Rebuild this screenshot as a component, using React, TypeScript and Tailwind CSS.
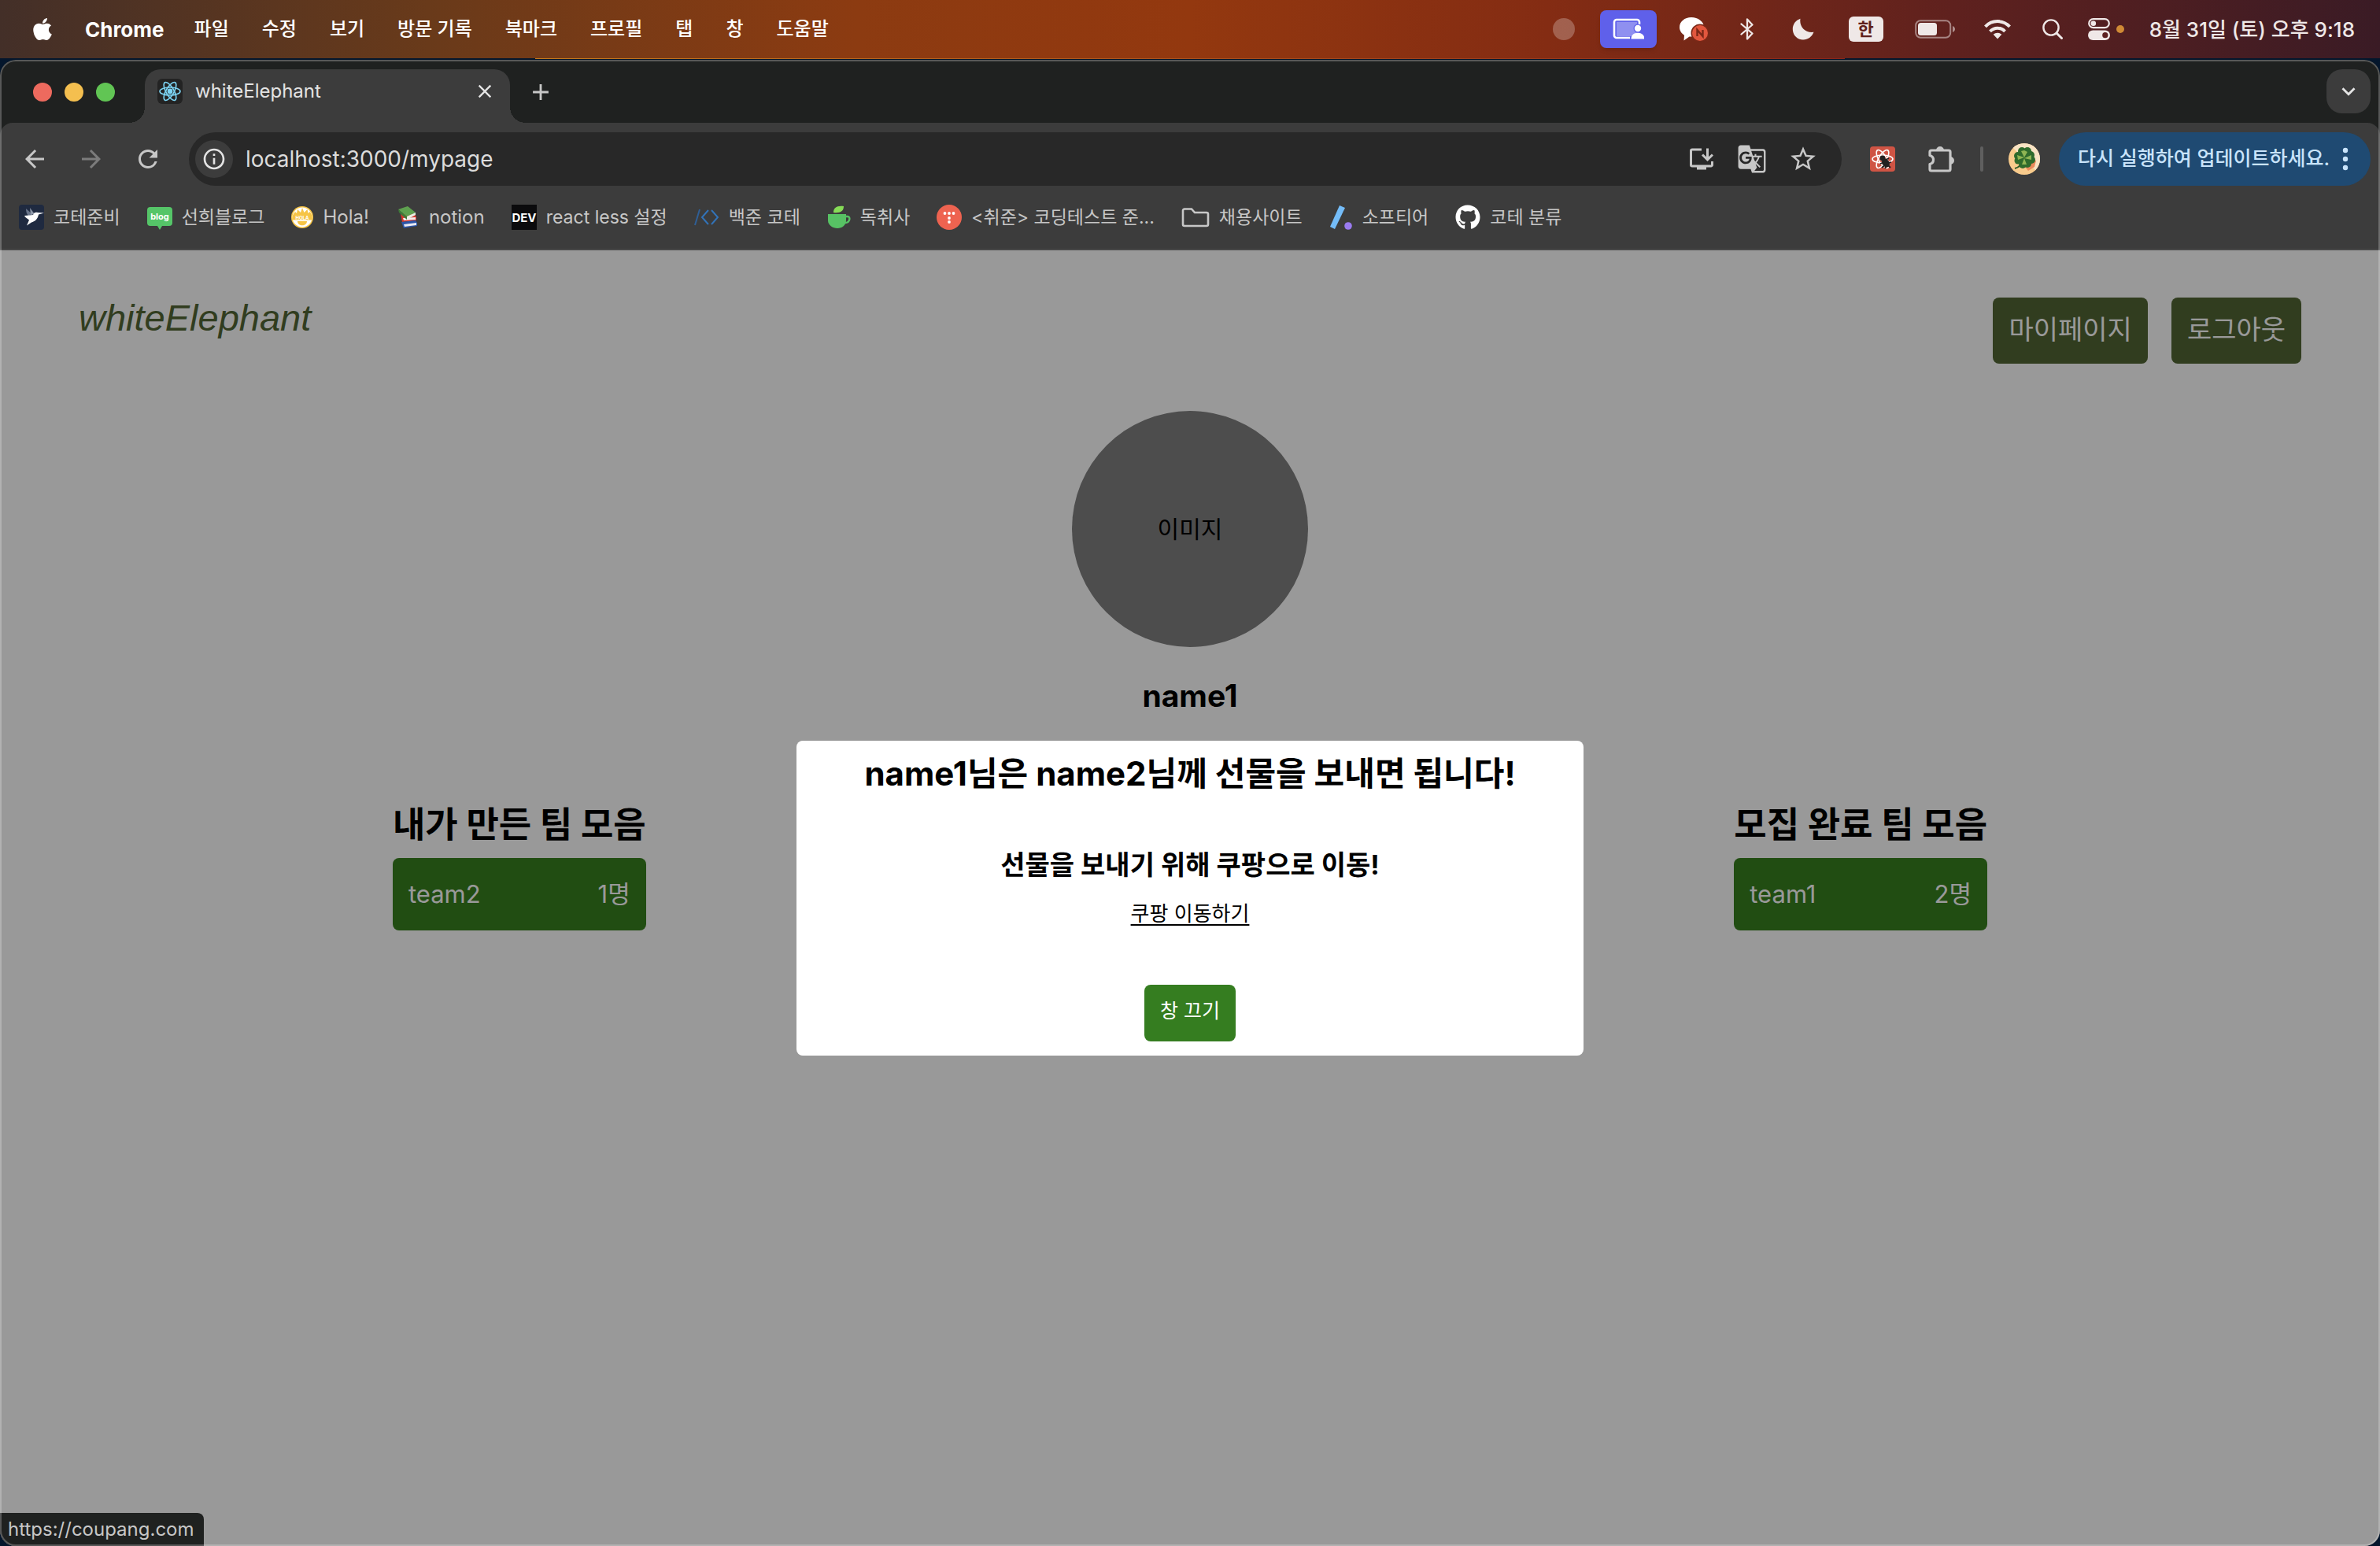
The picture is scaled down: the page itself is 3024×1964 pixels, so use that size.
import React from "react";
import {
  MdAdd,
  MdArrowBack,
  MdArrowForward,
  MdClose,
  MdGTranslate,
  MdInfoOutline,
  MdInstallDesktop,
  MdKeyboardArrowDown,
  MdRefresh,
  MdStarBorder,
} from "react-icons/md";
import { FaApple, FaGithub } from "react-icons/fa";

const menus = ["파일", "수정", "보기", "방문 기록", "북마크", "프로필", "탭", "창", "도움말"];

function ReactAtom({ color, core = 2 }: { color: string; core?: number }) {
  return (
    <g fill="none" stroke={color} strokeWidth="1.6">
      <ellipse cx="16" cy="16" rx="13" ry="5" />
      <ellipse cx="16" cy="16" rx="13" ry="5" transform="rotate(60 16 16)" />
      <ellipse cx="16" cy="16" rx="13" ry="5" transform="rotate(120 16 16)" />
      <circle cx="16" cy="16" r={core} fill={color} />
    </g>
  );
}

function ScreenShareIcon() {
  return (
    <svg viewBox="0 0 40 28" className="w-10 h-7" aria-hidden="true">
      <rect x="5" y="5" width="26" height="18" fill="#fff" opacity="0.3" />
      <path d="M22 25H5a3 3 0 0 1-3-3V5a3 3 0 0 1 3-3h26a3 3 0 0 1 3 3v3" fill="none" stroke="#fff" strokeWidth="2.6" />
      <circle cx="32" cy="13" r="5.5" fill="#5f60ea" />
      <circle cx="32" cy="13" r="4.2" fill="#fff" />
      <path d="M23.500 26.500c0-5 3.500-7.700 8.500-7.700s8.500 2.700 8.500 7.700z" fill="#fff" />
    </svg>
  );
}

function ChatIcon() {
  return (
    <svg viewBox="0 0 38 32" className="w-[38px] h-8" aria-hidden="true">
      <path d="M16 1C7.500 1 1 6.500 1 13.500c0 4.500 2.500 8 6 10.200L6.500 30.500l7-5H16c9 0 16-5 16-12S24.500 1 16 1z" fill="#fff" />
      <circle cx="27" cy="21" r="11.500" fill="#7b2817" />
      <circle cx="27" cy="21" r="10" fill="#e2573e" />
      <path d="M23.500 25v-8l7 8v-8" fill="none" stroke="#7b2817" strokeWidth="2.400" />
    </svg>
  );
}

function BluetoothIcon() {
  return (
    <svg viewBox="0 0 18 30" className="w-[18px] h-[30px]" aria-hidden="true">
      <path d="M1.500 8.500l14 12L9 27.500V2.500l6.500 7-14 12" fill="none" stroke="#efe8e7" strokeWidth="2.300" strokeLinejoin="round" strokeLinecap="round" />
    </svg>
  );
}

function MoonIcon() {
  return (
    <svg viewBox="0 0 28 28" className="w-7 h-7" aria-hidden="true">
      <path d="M10.500 0.800C9 9.500 15 19 27.500 17.800 25 24 20 27.500 14 27.500 6.500 27.500 0.800 21.500 0.800 14 0.800 8 4.500 2.800 10.500 0.800z" fill="#efe8e7" />
    </svg>
  );
}

function BatteryIcon() {
  return (
    <svg viewBox="0 0 52 24" className="w-[52px] h-6" aria-hidden="true">
      <rect x="1.200" y="1.200" width="44" height="21.600" rx="6" fill="none" stroke="#fff" strokeOpacity="0.45" strokeWidth="2" />
      <rect x="4" y="4" width="24" height="16" rx="3.500" fill="#efe8e7" />
      <path d="M48 8c4 1.500 4 6.500 0 8z" fill="#fff" opacity="0.5" />
    </svg>
  );
}

function WifiIcon() {
  return (
    <svg viewBox="0 0 34 26" className="w-[34px] h-[26px]" aria-hidden="true">
      <g fill="none" stroke="#efe8e7" strokeWidth="4">
        <path d="M1.500 9.800C10 0.800 24 0.800 32.500 9.800" />
        <path d="M7.500 15.800c5.500-5.500 13.500-5.500 19 0" />
      </g>
      <path d="M17 25.500l-5.300-5.700c3-2.800 7.600-2.800 10.600 0z" fill="#efe8e7" />
    </svg>
  );
}

function SearchIcon() {
  return (
    <svg viewBox="0 0 26 26" className="w-[26px] h-[26px]" aria-hidden="true">
      <circle cx="11" cy="11" r="9.600" fill="none" stroke="#efe8e7" strokeWidth="2.400" />
      <path d="M18 18l6.500 6.500" stroke="#efe8e7" strokeWidth="3" strokeLinecap="round" />
    </svg>
  );
}

function ControlCenterIcon() {
  return (
    <svg viewBox="0 0 28 28" className="w-7 h-7" aria-hidden="true">
      <rect x="1.200" y="1.200" width="25.600" height="11" rx="5.500" fill="none" stroke="#efe8e7" strokeWidth="2.200" />
      <circle cx="6.800" cy="6.700" r="3.300" fill="#efe8e7" />
      <rect x="0" y="15.500" width="28" height="12.500" rx="6.200" fill="#efe8e7" />
      <circle cx="21.800" cy="21.700" r="3.600" fill="#5b2020" />
    </svg>
  );
}

function MenuBar() {
  return (
    <header className="flex h-[74px] items-center bg-[linear-gradient(90deg,#432f28,#693a1a_18%,#8c3b11_36%,#93380f_50%,#842c13_65%,#5f211e_82%,#3a1b25)] pl-[38px] pr-8 text-[24px] text-white">
      <nav aria-label="메뉴 막대" className="flex items-center gap-[42px] font-medium [text-shadow:0_2px_4px_rgba(0,0,0,0.3)]">
        <button aria-label="Apple" className="-mr-1">
          <FaApple size={32} />
        </button>
        <button className="-mr-1 text-[26px] font-bold">Chrome</button>
        {menus.map((m) => (
          <button key={m}>{m}</button>
        ))}
      </nav>
      <div className="ml-auto flex items-center text-[#efe8e7]">
        <span className="h-7 w-7 rounded-full bg-white/25" />
        <span className="ml-8 flex h-12 w-[72px] items-center justify-center rounded-lg bg-[#5f60ea] shadow-md">
          <ScreenShareIcon />
        </span>
        <span className="ml-7"><ChatIcon /></span>
        <span className="ml-10"><BluetoothIcon /></span>
        <span className="ml-12"><MoonIcon /></span>
        <span className="ml-11 flex h-8 w-11 items-center justify-center rounded-md bg-[#efe8e7] text-[22px] font-bold leading-8 text-[#5f1f1c]">한</span>
        <span className="ml-10"><BatteryIcon /></span>
        <span className="ml-9"><WifiIcon /></span>
        <span className="ml-10"><SearchIcon /></span>
        <span className="ml-8"><ControlCenterIcon /></span>
        <span className="ml-2 h-[10px] w-[10px] rounded-full bg-[#d08a35]" />
        <time className="ml-8 text-[26px] font-medium">8월 31일 (토) 오후 9:18</time>
      </div>
    </header>
  );
}

function TabStrip() {
  return (
    <div className="flex h-20 items-end pl-[42px] pr-3 pt-3">
      <div className="flex h-full items-center gap-4 pb-[10px]">
        <button aria-label="닫기" className="h-6 w-6 rounded-full bg-[#ed6a5e]" />
        <button aria-label="최소화" className="h-6 w-6 rounded-full bg-[#f4bf4f]" />
        <button aria-label="최대화" className="h-6 w-6 rounded-full bg-[#61c554]" />
      </div>
      <div className="relative ml-[38px] flex h-full w-[464px] items-center rounded-t-[20px] bg-[#3c3c3c] px-4 pb-3 before:absolute before:-left-5 before:bottom-0 before:h-5 before:w-5 before:bg-[radial-gradient(circle_at_0_0,transparent_20px,#3c3c3c_20px)] after:absolute after:-right-5 after:bottom-0 after:h-5 after:w-5 after:bg-[radial-gradient(circle_at_100%_0,transparent_20px,#3c3c3c_20px)]">
        <svg viewBox="0 0 32 32" className="h-8 w-8 rounded-md bg-[#232323]" aria-hidden="true">
          <ReactAtom color="#7bd3f2" core={2.6} />
        </svg>
        <span className="ml-4 text-[24px] text-[#e3e3e3]">whiteElephant</span>
        <button aria-label="탭 닫기" className="ml-auto mr-0.5 text-[#e3e3e3]">
          <MdClose size={28} />
        </button>
      </div>
      <button aria-label="새 탭" className="mb-[22px] ml-[22px] text-[#c7c7c7]">
        <MdAdd size={34} />
      </button>
      <button aria-label="탭 검색" className="mb-3 ml-auto flex h-14 w-14 items-center justify-center rounded-[20px] bg-[#3c3c3c] text-[#e3e3e3]">
        <MdKeyboardArrowDown size={34} />
      </button>
    </div>
  );
}

function PuzzleIcon() {
  return (
    <svg viewBox="0 0 34 34" className="h-[34px] w-[34px]" aria-hidden="true">
      <path
        d="M4 6h22a2 2 0 0 1 2 2v22a2 2 0 0 1-2 2H4a2 2 0 0 1-2-2v-6.500c6-1.500 6-9.500 0-11V8a2 2 0 0 1 2-2z"
        fill="none"
        stroke="#c7c7c7"
        strokeWidth="3.200"
        strokeLinejoin="round"
      />
      <path d="M10 6a5 5 0 0 1 10 0zM28 14a5 5 0 0 1 0 10z" fill="#c7c7c7" />
    </svg>
  );
}

function CloverAvatar() {
  return (
    <svg viewBox="0 0 40 40" className="h-10 w-10 rounded-full" aria-hidden="true">
      <rect width="40" height="40" fill="#f8cb8c" />
      <path d="M0 0l40 40V0z" fill="#f8e3c4" />
      <path d="M16 24l9 11 8-5 2-8-8-2z" fill="#e98a5c" />
      <path d="M20 19C17 27 13 31 8 32" fill="none" stroke="#2d5a27" strokeWidth="2" />
      <g fill="#2f6b2c">
        <circle cx="20" cy="18" r="8" />
        <circle cx="17" cy="10" r="5" />
        <circle cx="24" cy="10" r="5" />
        <circle cx="12" cy="16" r="5" />
        <circle cx="12" cy="22" r="4.500" />
        <circle cx="28" cy="15" r="5" />
        <circle cx="29" cy="21" r="5" />
        <circle cx="18" cy="27" r="5" />
        <circle cx="24" cy="26" r="5" />
      </g>
      <g fill="#8fb553">
        <path d="M20 18l-4-8 4-1 4 2zM20 18l-9-3 1 6zM20 19l9-4 0 6zM20 19l-3 8 6 0z" />
      </g>
    </svg>
  );
}

function Toolbar() {
  return (
    <div className="flex h-[92px] items-center pl-[26px] pr-3 text-[#c7c7c7]">
      <div className="flex items-center gap-9">
        <button aria-label="뒤로"><MdArrowBack size={36} /></button>
        <button aria-label="앞으로" className="text-[#7c7c7c]"><MdArrowForward size={36} /></button>
        <button aria-label="새로고침"><MdRefresh size={36} /></button>
      </div>
      <div className="ml-[34px] flex h-[68px] flex-1 items-center rounded-full bg-[#282828] pl-2 pr-[30px]">
        <button aria-label="사이트 정보" className="flex h-12 w-12 items-center justify-center rounded-full bg-[#3c3c3c] text-[#e3e3e3]">
          <MdInfoOutline size={32} />
        </button>
        <input
          aria-label="주소"
          type="text"
          defaultValue="localhost:3000/mypage"
          className="ml-4 min-w-0 flex-1 bg-transparent text-[28px] text-[#dcdcdc] outline-none"
        />
        <div className="flex items-center gap-[27px]">
          <button aria-label="앱 설치"><MdInstallDesktop size={36} /></button>
          <button aria-label="번역"><MdGTranslate size={38} /></button>
          <button aria-label="북마크 추가"><MdStarBorder size={38} /></button>
        </div>
      </div>
      <button aria-label="React Developer Tools" className="ml-9">
        <svg viewBox="0 0 32 32" className="h-8 w-8 rounded-sm bg-[#cf5444]" aria-hidden="true">
          <ReactAtom color="#ffffff" />
          <g stroke="#222" fill="#222" strokeWidth="1.800">
            <circle cx="16" cy="15" r="2.500" />
            <ellipse cx="20" cy="21" rx="3.500" ry="5" transform="rotate(-35 20 21)" />
            <path d="M13 22l5-2M15 27l5-4M19 28l2-4M20 17l4-2M23 21l4-1M23 24l3 3" />
          </g>
        </svg>
      </button>
      <button aria-label="확장 프로그램" className="ml-[42px]"><PuzzleIcon /></button>
      <span className="ml-8 h-8 w-1 rounded-full bg-[#5f5f5f]" />
      <button aria-label="프로필" className="ml-8"><CloverAvatar /></button>
      <button className="ml-6 flex h-[68px] items-center gap-4 rounded-full bg-[#1f4a72] pl-6 pr-7 text-[25px] font-medium text-[#c9e4fb]">
        다시 실행하여 업데이트하세요.
        <svg viewBox="0 0 8 30" className="h-[30px] w-2" fill="#c9e4fb" aria-hidden="true">
          <circle cx="4" cy="4" r="3.200" />
          <circle cx="4" cy="15" r="3.200" />
          <circle cx="4" cy="26" r="3.200" />
        </svg>
      </button>
    </div>
  );
}

const bookmarks: { label: string; latin?: boolean; icon: React.ReactNode }[] = [
  {
    label: "코테준비",
    icon: (
      <svg viewBox="0 0 32 32" className="h-8 w-8" aria-hidden="true">
        <rect width="32" height="32" rx="4" fill="#1f2a40" />
        <path d="M9 5l8 7-5 2c-2-2-3-5-3-9z" fill="#68748a" />
        <path d="M14 4l6 8-5 1z" fill="#8d97a8" />
        <path d="M7 14l11-1c1-3 3-4 6-3l8 0.500-7 2c-1 6-5 9-9 10l-6 4 3-7c-2-2-5-3-6-5.500z" fill="#fff" />
      </svg>
    ),
  },
  {
    label: "선희블로그",
    icon: (
      <svg viewBox="0 0 32 32" className="h-8 w-8" aria-hidden="true">
        <path d="M4 3h24a4 4 0 0 1 4 4v16a4 4 0 0 1-4 4h-9l-3 5-3-5H4a4 4 0 0 1-4-4V7a4 4 0 0 1 4-4z" fill="#55c568" />
        <text x="16" y="19" fontSize="11" fontWeight="700" fill="#fff" textAnchor="middle">blog</text>
      </svg>
    ),
  },
  {
    label: "Hola!",
    latin: true,
    icon: (
      <svg viewBox="0 0 28 28" className="h-7 w-7" aria-hidden="true">
        <circle cx="14" cy="14" r="14" fill="#f6c445" />
        <circle cx="14" cy="14" r="12.500" fill="#fff" />
        <path d="M1.500 17.500C1 10 4 9 5 7l2 2 1-5 4 4 2-6 2.500 6 4-4 1 5 2-2c2 2 3.500 5 3 10.500z" fill="#f6c445" />
        <text x="14" y="16.500" fontSize="6" fontWeight="700" fill="#fff" textAnchor="middle">HOLA</text>
        <path d="M8 19h12c0 7-12 7-12 0z" fill="#f6c445" />
      </svg>
    ),
  },
  {
    label: "notion",
    latin: true,
    icon: (
      <svg viewBox="0 0 30 30" className="h-[30px] w-[30px]" aria-hidden="true">
        <path d="M6 10l18 1 2 4v4l-18 2z" fill="#d8392f" />
        <path d="M9 16l16-1v3l-15 1z" fill="#f2eeee" />
        <path d="M7 21l18-2 2 3v4l-17 3z" fill="#2c55a8" />
        <path d="M10 24l16-2v3l-15 2z" fill="#e9e9f2" />
        <path d="M3 5l12-4 10 8-11 5z" fill="#5ea04f" />
        <path d="M3 5l11 9v4L4 9z" fill="#3d7a38" />
        <path d="M14 14l11-5v3l-11 6z" fill="#e7efe3" />
      </svg>
    ),
  },
  {
    label: "react less 설정",
    icon: (
      <svg viewBox="0 0 32 32" className="h-8 w-8" aria-hidden="true">
        <rect width="32" height="32" fill="#0b0b0d" />
        <text x="16" y="22" fontSize="15" fontWeight="700" fill="#fff" textAnchor="middle">DEV</text>
      </svg>
    ),
  },
  {
    label: "백준 코테",
    icon: (
      <svg viewBox="0 0 32 32" className="h-8 w-8" fill="none" strokeWidth="2" aria-hidden="true">
        <path d="M7 6L1 26" stroke="#2f5f96" />
        <path d="M18 7l-8 9 8 9M22 7l8 9-8 9" stroke="#3273b8" />
      </svg>
    ),
  },
  {
    label: "독취사",
    icon: (
      <svg viewBox="0 0 30 30" className="h-[30px] w-[30px]" aria-hidden="true">
        <path d="M8 9c0-6 4-9 13-8 0 6-4 9-13 8z" fill="#86dc57" />
        <path d="M1 11h23v8c0 6-5 10-11 10S1 25 1 19z" fill="#57c264" />
        <path d="M24 14h2c4 0 3 8-3 8" fill="none" stroke="#57c264" strokeWidth="2.400" />
      </svg>
    ),
  },
  {
    label: "<취준> 코딩테스트 준...",
    icon: (
      <svg viewBox="0 0 32 32" className="h-8 w-8" aria-hidden="true">
        <circle cx="16" cy="16" r="16" fill="#ee6350" />
        <g fill="#fff">
          <circle cx="10.500" cy="11" r="1.900" />
          <circle cx="16" cy="11" r="1.900" />
          <circle cx="21.500" cy="11" r="1.900" />
          <circle cx="16" cy="17" r="1.900" />
          <circle cx="16" cy="22" r="1.900" />
        </g>
      </svg>
    ),
  },
  {
    label: "채용사이트",
    icon: (
      <svg viewBox="0 0 36 32" className="h-8 w-9" aria-hidden="true">
        <path d="M4 5.500h9l4 4.500h15a2 2 0 0 1 2 2v13a2 2 0 0 1-2 2H4a2 2 0 0 1-2-2V7.500a2 2 0 0 1 2-2z" fill="none" stroke="#c7c7c7" strokeWidth="2.600" />
      </svg>
    ),
  },
  {
    label: "소프티어",
    icon: (
      <svg viewBox="0 0 30 32" className="h-8 w-[30px]" aria-hidden="true">
        <path d="M13 1l7 3L7 31l-6-3z" fill="#74bcf8" />
        <circle cx="24" cy="27" r="4.800" fill="#9a7bf0" />
      </svg>
    ),
  },
  { label: "코테 분류", icon: <FaGithub size={32} color="#ffffff" /> },
];

function BookmarkBar() {
  return (
    <nav aria-label="북마크" className="flex h-[70px] items-start gap-[34px] border-b-2 border-[#474747] pl-6 pt-2 text-[23px] text-[#c7c7c7]">
      {bookmarks.map((b) => (
        <a key={b.label} href="#" className="flex h-10 items-center gap-3 whitespace-nowrap">
          {b.icon}
          <span className={b.latin ? "text-[24px]" : ""}>{b.label}</span>
        </a>
      ))}
    </nav>
  );
}

function TeamColumn({ title, team, count }: { title: string; team: string; count: string }) {
  return (
    <section className="flex flex-col">
      <h2 className="text-[45px] font-bold leading-[52px] text-black">{title}</h2>
      <button className="mt-4 flex h-[92px] items-center justify-between rounded-lg bg-[#38801f] px-5 text-[31px] text-white">
        <span>{team}</span>
        <span>{count}</span>
      </button>
    </section>
  );
}

function MyPage() {
  return (
    <main className="relative flex flex-1 flex-col bg-white">
      <div className="flex items-start justify-between px-[100px] pt-[60px]">
        <a href="#" className="font-['Liberation_Sans',sans-serif] text-[47px] italic leading-[52px] text-[#526634]">whiteElephant</a>
        <div className="flex gap-[30px]">
          <button className="h-[84px] rounded-lg bg-[#526634] px-5 pb-1 text-[34px] text-white">마이페이지</button>
          <button className="h-[84px] rounded-lg bg-[#526634] px-5 pb-1 text-[34px] text-white">로그아웃</button>
        </div>
      </div>
      <div className="mt-[60px] flex flex-col items-center">
        <div className="flex h-[300px] w-[300px] items-center justify-center rounded-full bg-[#808080] text-[30px] text-black">이미지</div>
        <h1 className="mt-[38px] text-[39px] font-bold leading-[48px] text-black">name1</h1>
      </div>
      <div className="mt-[114px] flex justify-between px-[16.5%]">
        <TeamColumn title="내가 만든 팀 모음" team="team2" count="1명" />
        <TeamColumn title="모집 완료 팀 모음" team="team1" count="2명" />
      </div>
      <div className="absolute inset-0 flex items-center justify-center bg-black/40">
        <div role="dialog" aria-label="선물 안내" className="flex h-[400px] w-[1000px] flex-col items-center rounded-lg bg-white pt-4 text-black">
          <h2 className="text-[42px] font-bold leading-[52px]">name1님은 name2님께 선물을 보내면 됩니다!</h2>
          <h3 className="mt-[66px] text-[34px] font-bold leading-[48px]">선물을 보내기 위해 쿠팡으로 이동!</h3>
          <a href="https://coupang.com" className="mt-[18px] text-[26px] leading-[40px] underline decoration-2 underline-offset-4">쿠팡 이동하기</a>
          <button className="mt-auto mb-[18px] h-[72px] rounded-lg bg-[#357d20] px-5 pb-1 text-[25px] text-white">창 끄기</button>
        </div>
      </div>
      <div className="absolute bottom-0 left-0 rounded-tr-lg bg-[#1f2120] py-1 pl-[10px] pr-3 text-[24px] leading-[34px] text-[#c7c7c7]">
        https://coupang.com
      </div>
    </main>
  );
}

export default function App() {
  return (
    <div className="flex min-h-screen flex-col bg-[#04162c] font-['Inter','Noto_Sans_CJK_KR',sans-serif]">
      <MenuBar />
      <div className="mx-auto h-px w-[55%] bg-linear-to-r from-[#c47a1c] to-[#8a2419]" />
      <div className="relative mt-px flex flex-1 flex-col overflow-hidden rounded-[20px] bg-[#1f2120]">
        <TabStrip />
        <div className="rounded-t-2xl bg-[#3c3c3c]">
          <Toolbar />
          <BookmarkBar />
        </div>
        <MyPage />
        <div className="pointer-events-none absolute inset-0 rounded-[20px] border-2 border-white/25" />
      </div>
    </div>
  );
}
